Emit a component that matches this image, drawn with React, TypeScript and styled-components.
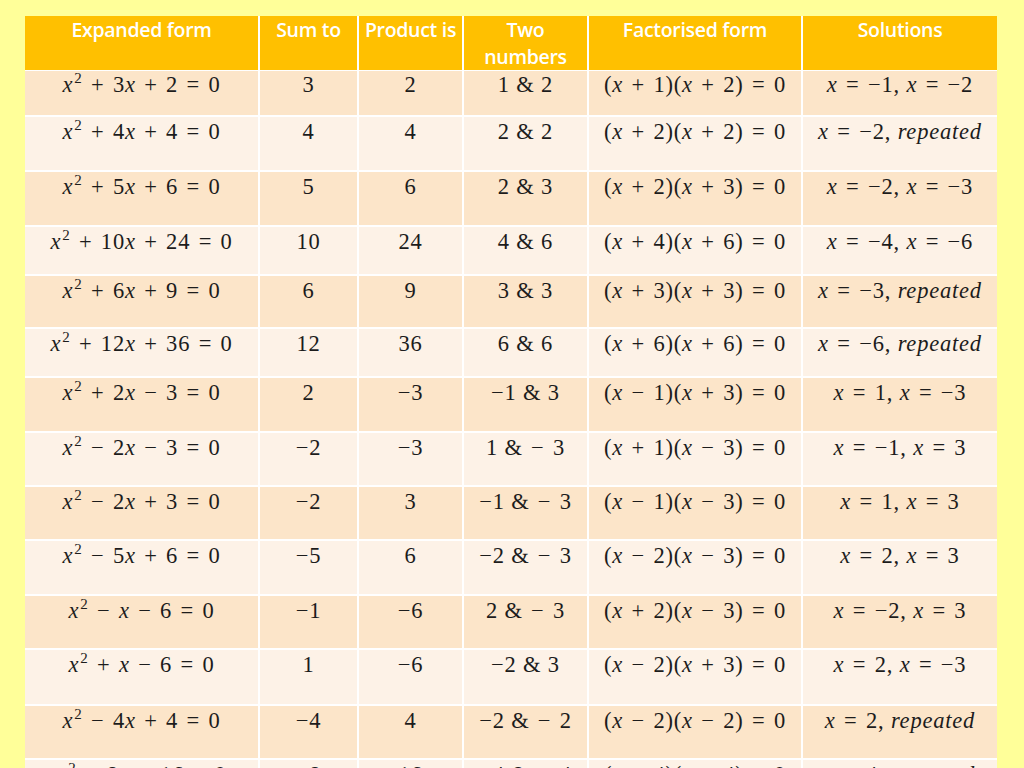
import React from 'react';
import styled, { createGlobalStyle } from 'styled-components';

const Global = createGlobalStyle`
  html, body { margin: 0; padding: 0; height: 768px; overflow: hidden; background: #FFFF99; }
  #root { height: 768px; }
`;

const COLS = '233px 97px 103px 123px 212px 194px';

const Page = styled.div`
  width: 1024px;
  height: 768px;
  box-sizing: border-box;
  padding: 16px 0 0 25px;
  background: #FFFF99;
  overflow: hidden;
`;

const Table = styled.div`
  width: 972px;
  display: flex;
  flex-direction: column;
  gap: 2px;
  background: #ffffff;
`;

const HeaderRow = styled.div`
  display: grid;
  grid-template-columns: ${COLS};
  column-gap: 2px;
  height: 52px;
  margin-bottom: 1px;
`;

const HeaderCell = styled.div`
  background: #FFC000;
  color: #ffffff;
  font-family: "Open Sans", "Noto Sans", sans-serif;
  font-weight: 600;
  font-size: 19.5px;
  line-height: 27px;
  text-align: center;
  padding-top: 0;
  white-space: nowrap;
  letter-spacing: -0.3px;
`;

const BodyRow = styled.div<{ $h: number }>`
  display: grid;
  grid-template-columns: ${COLS};
  column-gap: 2px;
  height: ${(p) => p.$h - 2}px;
`;

const Cell = styled.div<{ $band: boolean; $pt: number }>`
  background: ${(p) => (p.$band ? '#FCE5C9' : '#FDF2E7')};
  color: #1c1c1c;
  font-family: "Liberation Serif", "DejaVu Serif", serif;
  font-size: 22.5px;
  line-height: 26px;
  letter-spacing: 0.8px;
  text-align: center;
  padding-top: ${(p) => p.$pt}px;
  white-space: nowrap;
`;

const Var = styled.i`
  font-style: italic;
  letter-spacing: 0.8px;
`;

const Sup = styled.sup`
  font-size: 15px;
  line-height: 0;
  vertical-align: 0;
  position: relative;
  top: -9px;
  margin-left: 1px;
`;

const Op = styled.span`
  padding: 0 2px;
`;

function Math({ src }: { src: string }) {
  const parts: React.ReactNode[] = [];
  let i = 0;
  let k = 0;
  const prevSig = (idx: number) => {
    let j = idx - 1;
    while (j >= 0 && src[j] === ' ') j--;
    return j < 0 ? '' : src[j];
  };
  while (i < src.length) {
    const ch = src[i];
    if (/[a-z]/.test(ch)) {
      let j = i;
      while (j < src.length && /[a-z]/.test(src[j])) j++;
      parts.push(<Var key={k++}>{src.slice(i, j)}</Var>);
      i = j;
    } else if (ch === '^') {
      parts.push(<Sup key={k++}>{src[i + 1]}</Sup>);
      i += 2;
    } else if (ch === '=' || ch === '+' || ch === '−') {
      const p = prevSig(i);
      const unary = ch === '−' && (p === '' || p === '=' || p === ',');
      parts.push(unary ? <span key={k++}>{ch}</span> : <Op key={k++}>{ch}</Op>);
      i++;
    } else {
      let j = i;
      while (j < src.length && !/[a-z^=+−]/.test(src[j])) j++;
      parts.push(<span key={k++}>{src.slice(i, j)}</span>);
      i = j;
    }
  }
  return <>{parts}</>;
}

type R = { h: number; c: string[] };

const rows: R[] = [
  { h: 46, c: ['x^2 + 3x + 2 = 0', '3', '2', '1 & 2', '(x + 1)(x + 2) = 0', 'x = −1, x = −2'] },
  { h: 55, c: ['x^2 + 4x + 4 = 0', '4', '4', '2 & 2', '(x + 2)(x + 2) = 0', 'x = −2, repeated'] },
  { h: 55, c: ['x^2 + 5x + 6 = 0', '5', '6', '2 & 3', '(x + 2)(x + 3) = 0', 'x = −2, x = −3'] },
  { h: 49, c: ['x^2 + 10x + 24 = 0', '10', '24', '4 & 6', '(x + 4)(x + 6) = 0', 'x = −4, x = −6'] },
  { h: 53, c: ['x^2 + 6x + 9 = 0', '6', '9', '3 & 3', '(x + 3)(x + 3) = 0', 'x = −3, repeated'] },
  { h: 49, c: ['x^2 + 12x + 36 = 0', '12', '36', '6 & 6', '(x + 6)(x + 6) = 0', 'x = −6, repeated'] },
  { h: 55, c: ['x^2 + 2x − 3 = 0', '2', '−3', '−1 & 3', '(x − 1)(x + 3) = 0', 'x = 1, x = −3'] },
  { h: 54, c: ['x^2 − 2x − 3 = 0', '−2', '−3', '1 & − 3', '(x + 1)(x − 3) = 0', 'x = −1, x = 3'] },
  { h: 54, c: ['x^2 − 2x + 3 = 0', '−2', '3', '−1 & − 3', '(x − 1)(x − 3) = 0', 'x = 1, x = 3'] },
  { h: 55, c: ['x^2 − 5x + 6 = 0', '−5', '6', '−2 & − 3', '(x − 2)(x − 3) = 0', 'x = 2, x = 3'] },
  { h: 54, c: ['x^2 − x − 6 = 0', '−1', '−6', '2 & − 3', '(x + 2)(x − 3) = 0', 'x = −2, x = 3'] },
  { h: 56, c: ['x^2 + x − 6 = 0', '1', '−6', '−2 & 3', '(x − 2)(x + 3) = 0', 'x = 2, x = −3'] },
  { h: 54, c: ['x^2 − 4x + 4 = 0', '−4', '4', '−2 & − 2', '(x − 2)(x − 2) = 0', 'x = 2, repeated'] },
  { h: 55, c: ['x^2 − 8x + 16 = 0', '−8', '16', '−4 & − 4', '(x − 4)(x − 4) = 0', 'x = 4, repeated'] },
];

export default function App() {
  return (
    <>
      <Global />
      <Page>
        <Table>
          <HeaderRow>
            <HeaderCell>Expanded form</HeaderCell>
            <HeaderCell>Sum to</HeaderCell>
            <HeaderCell>Product is</HeaderCell>
            <HeaderCell>
              Two
              <br />
              numbers
            </HeaderCell>
            <HeaderCell>Factorised form</HeaderCell>
            <HeaderCell>Solutions</HeaderCell>
          </HeaderRow>
          {rows.map((r, ri) => (
            <BodyRow key={ri} $h={r.h}>
              {r.c.map((t, ci) => (
                <Cell key={ci} $band={ri % 2 === 0} $pt={ri === 0 ? 1 : 2}>
                  <Math src={t} />
                </Cell>
              ))}
            </BodyRow>
          ))}
        </Table>
      </Page>
    </>
  );
}
